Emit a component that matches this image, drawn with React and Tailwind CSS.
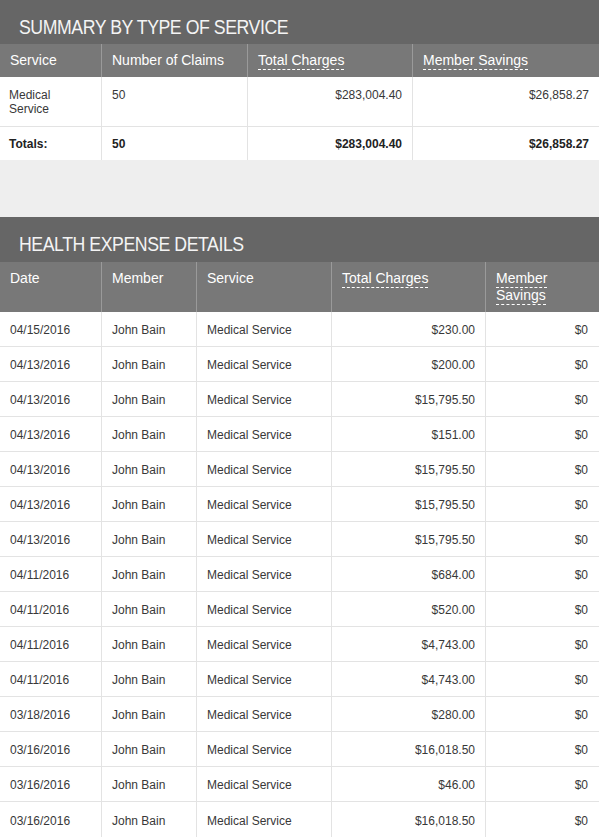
import React from "react";

const font = { fontFamily: '"Liberation Sans", Arial, sans-serif' };

const details = [
  ["04/15/2016", "$230.00"],
  ["04/13/2016", "$200.00"],
  ["04/13/2016", "$15,795.50"],
  ["04/13/2016", "$151.00"],
  ["04/13/2016", "$15,795.50"],
  ["04/13/2016", "$15,795.50"],
  ["04/13/2016", "$15,795.50"],
  ["04/11/2016", "$684.00"],
  ["04/11/2016", "$520.00"],
  ["04/11/2016", "$4,743.00"],
  ["04/11/2016", "$4,743.00"],
  ["03/18/2016", "$280.00"],
  ["03/16/2016", "$16,018.50"],
  ["03/16/2016", "$46.00"],
  ["03/16/2016", "$16,018.50"],
];

function Dashed({ children }) {
  return (
    <span className="border-b border-dashed border-white pb-[1px]">{children}</span>
  );
}

function Title({ children, h }) {
  return (
    <div className={`bg-[#666666] text-white flex items-center pl-[19px] ${h} pt-[9px]`}>
      <span className="inline-block origin-left scale-x-[0.885] text-[20px] tracking-[-0.5px] whitespace-nowrap text-[#f4f4f4]">
        {children}
      </span>
    </div>
  );
}

export default function App() {
  return (
    <div className="w-[599px] bg-white" style={font}>
      <Title h="h-[44px]">SUMMARY BY TYPE OF SERVICE</Title>
      <div className="grid grid-cols-[101px_146px_165px_187px] bg-[#787878] text-white text-[14px] leading-[17px] h-[33px]">
        <div className="px-[10px] pt-[8px]">Service</div>
        <div className="px-[10px] pt-[8px] border-l border-[#9a9a9a]">Number of Claims</div>
        <div className="px-[10px] pt-[8px] border-l border-[#9a9a9a]"><Dashed>Total Charges</Dashed></div>
        <div className="px-[10px] pt-[8px] border-l border-[#9a9a9a]"><Dashed>Member Savings</Dashed></div>
      </div>
      <div className="grid grid-cols-[101px_146px_165px_187px] text-[12px] leading-[14px] text-[#383838] h-[50px] border-b border-[#e3e3e3]">
        <div className="pl-[9px] pr-[10px] pt-[11px]">Medical<br />Service</div>
        <div className="px-[10px] pt-[11px] border-l border-[#e3e3e3]">50</div>
        <div className="px-[10px] pt-[11px] border-l border-[#e3e3e3] text-right">$283,004.40</div>
        <div className="px-[10px] pt-[11px] border-l border-[#e3e3e3] text-right">$26,858.27</div>
      </div>
      <div className="grid grid-cols-[101px_146px_165px_187px] text-[12px] leading-[14px] text-[#222222] font-bold h-[33px]">
        <div className="pl-[9px] pr-[10px] pt-[1px] flex items-center">Totals:</div>
        <div className="px-[10px] pt-[1px] flex items-center border-l border-[#e3e3e3]">50</div>
        <div className="px-[10px] pt-[1px] flex items-center justify-end border-l border-[#e3e3e3]">$283,004.40</div>
        <div className="px-[10px] pt-[1px] flex items-center justify-end border-l border-[#e3e3e3]">$26,858.27</div>
      </div>
      <div className="h-[57px] bg-[#eeeeee]" />
      <Title h="h-[45px]">HEALTH EXPENSE DETAILS</Title>
      <div className="grid grid-cols-[101px_95px_135px_154px_114px] bg-[#787878] text-white text-[14px] leading-[17px] h-[50px]">
        <div className="px-[10px] pt-[8px]">Date</div>
        <div className="px-[10px] pt-[8px] border-l border-[#9a9a9a]">Member</div>
        <div className="px-[10px] pt-[8px] border-l border-[#9a9a9a]">Service</div>
        <div className="px-[10px] pt-[8px] border-l border-[#9a9a9a]"><Dashed>Total Charges</Dashed></div>
        <div className="px-[10px] pt-[8px] border-l border-[#9a9a9a]">
          <Dashed>Member</Dashed>
          <br />
          <Dashed>Savings</Dashed>
        </div>
      </div>
      {details.map(([d, c], i) => (
        <div
          key={i}
          className={`grid grid-cols-[101px_95px_135px_154px_114px] text-[12px] leading-[14px] text-[#383838] h-[35px] ${i < details.length - 1 ? "border-b border-[#e3e3e3]" : ""}`}
        >
          <div className="px-[10px] pt-[2px] flex items-center">{d}</div>
          <div className="px-[10px] pt-[2px] flex items-center border-l border-[#e3e3e3]">John Bain</div>
          <div className="px-[10px] pt-[2px] flex items-center border-l border-[#e3e3e3]">Medical Service</div>
          <div className="px-[10px] pt-[2px] flex items-center justify-end border-l border-[#e3e3e3]">{c}</div>
          <div className="pl-[10px] pr-[11px] pt-[2px] flex items-center justify-end border-l border-[#e3e3e3]">
            {"$0"}
          </div>
        </div>
      ))}
    </div>
  );
}
